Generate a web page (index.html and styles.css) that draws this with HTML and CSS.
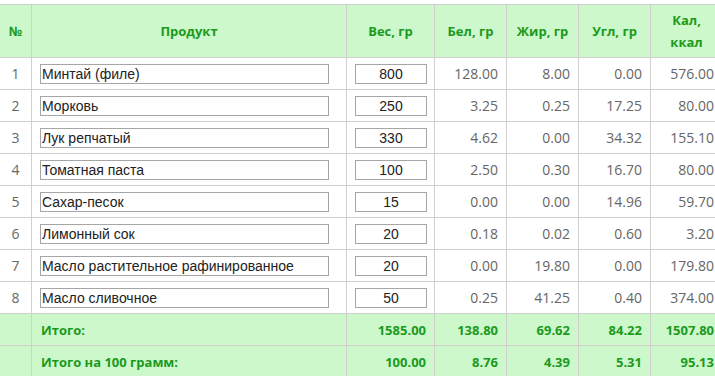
FILE: index.html
```html
<!DOCTYPE html>
<html lang="ru">
<head>
<meta charset="utf-8">
<link rel="stylesheet" href="styles.css">
</head>
<body>
<table class="calc">
  <colgroup>
    <col class="c-num"><col class="c-prod"><col class="c-w"><col class="c-n"><col class="c-n"><col class="c-n"><col class="c-n">
  </colgroup>
  <thead>
    <tr>
      <th>№</th><th>Продукт</th><th>Вес, гр</th><th>Бел, гр</th><th>Жир, гр</th><th>Угл, гр</th><th>Кал,<br>ккал</th>
    </tr>
  </thead>
  <tbody>
    <tr><td class="num">1</td><td><input class="prod" value="Минтай (филе)"></td><td><input class="w" value="800"></td><td>128.00</td><td>8.00</td><td>0.00</td><td>576.00</td></tr>
    <tr><td class="num">2</td><td><input class="prod" value="Морковь"></td><td><input class="w" value="250"></td><td>3.25</td><td>0.25</td><td>17.25</td><td>80.00</td></tr>
    <tr><td class="num">3</td><td><input class="prod" value="Лук репчатый"></td><td><input class="w" value="330"></td><td>4.62</td><td>0.00</td><td>34.32</td><td>155.10</td></tr>
    <tr><td class="num">4</td><td><input class="prod" value="Томатная паста"></td><td><input class="w" value="100"></td><td>2.50</td><td>0.30</td><td>16.70</td><td>80.00</td></tr>
    <tr><td class="num">5</td><td><input class="prod" value="Сахар-песок"></td><td><input class="w" value="15"></td><td>0.00</td><td>0.00</td><td>14.96</td><td>59.70</td></tr>
    <tr><td class="num">6</td><td><input class="prod" value="Лимонный сок"></td><td><input class="w" value="20"></td><td>0.18</td><td>0.02</td><td>0.60</td><td>3.20</td></tr>
    <tr><td class="num">7</td><td><input class="prod" value="Масло растительное рафинированное"></td><td><input class="w" value="20"></td><td>0.00</td><td>19.80</td><td>0.00</td><td>179.80</td></tr>
    <tr><td class="num">8</td><td><input class="prod" value="Масло сливочное"></td><td><input class="w" value="50"></td><td>0.25</td><td>41.25</td><td>0.40</td><td>374.00</td></tr>
  </tbody>
  <tfoot>
    <tr><td></td><td class="label">Итого:</td><td>1585.00</td><td>138.80</td><td>69.62</td><td>84.22</td><td>1507.80</td></tr>
    <tr><td></td><td class="label">Итого на 100 грамм:</td><td>100.00</td><td>8.76</td><td>4.39</td><td>5.31</td><td>95.13</td></tr>
  </tfoot>
</table>
</body>
</html>
```
FILE: styles.css
```css
html, body {
  margin: 0;
  padding: 0;
  overflow: hidden;
  background: #fff;
}
body {
  padding-top: 4px;
  font-family: "Open Sans", "DejaVu Sans", sans-serif;
}
.calc {
  border-collapse: collapse;
  table-layout: fixed;
  width: 724px;
  margin-left: -1px;
  font-size: 13px;
  color: #666;
}
.c-num { width: 32px; }
.c-prod { width: 315px; }
.c-w { width: 88px; }
.c-n { width: 72px; }
.calc th, .calc td {
  border: 1px solid #d0d0d0;
  padding: 0 8px;
}
.calc th {
  background: #ccf8cc;
  color: #1c9a1c;
  font-weight: bold;
  font-size: 13px;
  line-height: 22px;
  height: 52px;
  text-align: center;
}
.calc td {
  height: 31px;
  text-align: right;
  font-size: 14px;
}
.calc td.num {
  text-align: center;
  padding: 0;
}
.calc input {
  font-family: "Liberation Sans", Arial, sans-serif;
  font-size: 14px;
  color: #222;
  border: 1px solid #a6a6a6;
  border-radius: 0;
  height: 20px;
  box-sizing: border-box;
  padding: 0 1px;
  margin: 0;
  display: block;
  background: #fff;
}
.calc input.prod { width: 289px; }
.calc input.w { width: 72px; text-align: center; }
.calc tfoot td {
  background: #ccf8cc;
  color: #1c9a1c;
  font-weight: bold;
  font-size: 13px;
}
.calc tfoot td.label {
  text-align: left;
  padding-left: 9px;
}
```
